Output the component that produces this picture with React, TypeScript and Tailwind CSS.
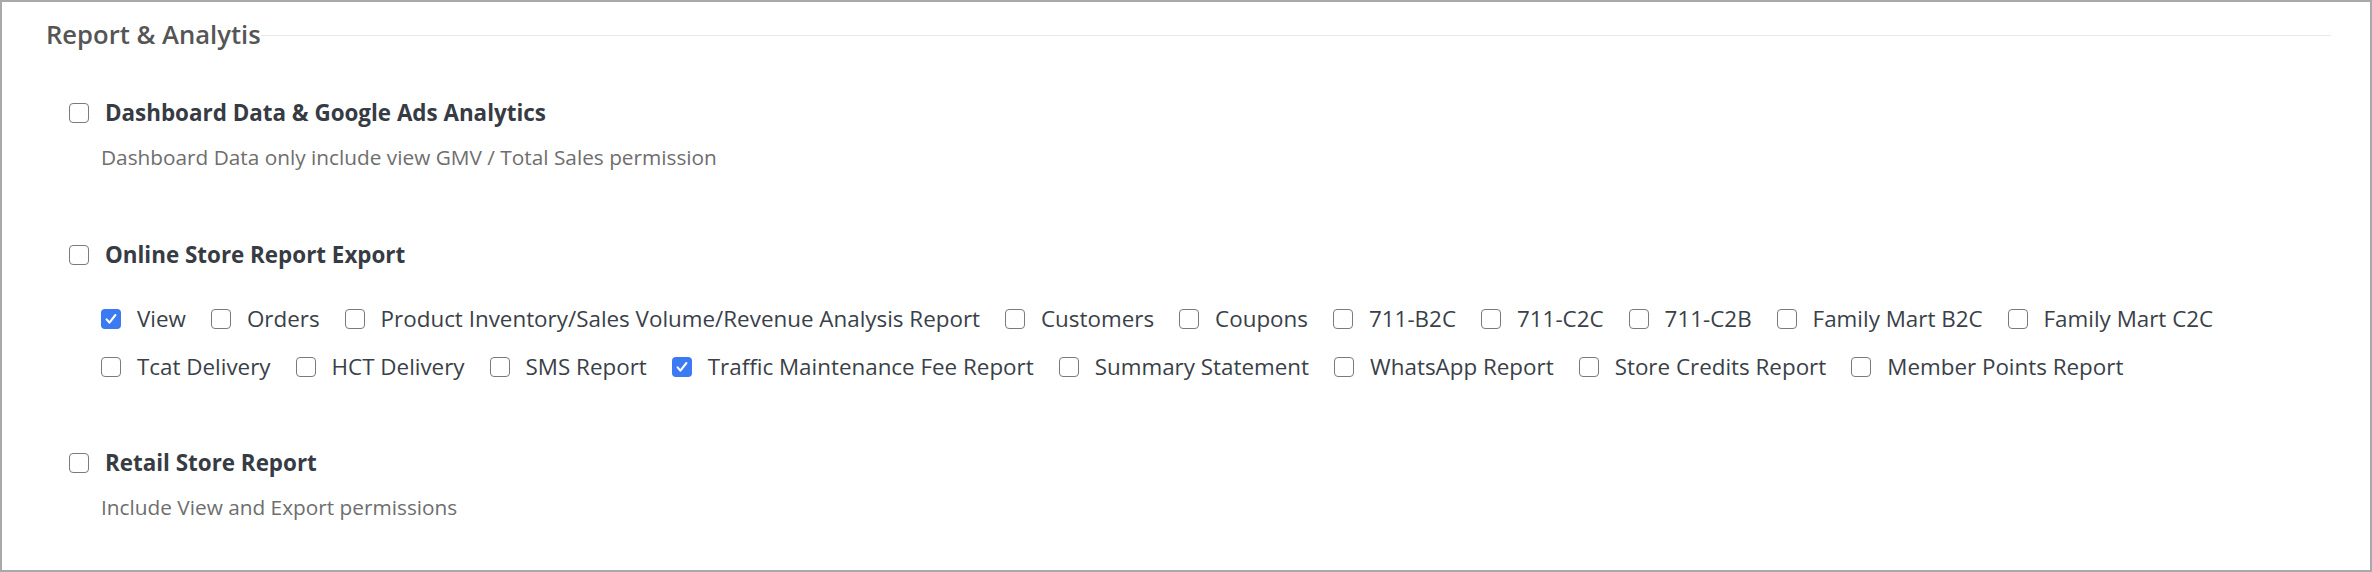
import React from 'react';

type Item = { label: string; checked?: boolean };

const onlineStoreItems: Item[] = [
    { label: 'View', checked: true },
    { label: 'Orders' },
    { label: 'Product Inventory/Sales Volume/Revenue Analysis Report' },
    { label: 'Customers' },
    { label: 'Coupons' },
    { label: '711-B2C' },
    { label: '711-C2C' },
    { label: '711-C2B' },
    { label: 'Family Mart B2C' },
    { label: 'Family Mart C2C' },
    { label: 'Tcat Delivery' },
    { label: 'HCT Delivery' },
    { label: 'SMS Report' },
    { label: 'Traffic Maintenance Fee Report', checked: true },
    { label: 'Summary Statement' },
    { label: 'WhatsApp Report' },
    { label: 'Store Credits Report' },
    { label: 'Member Points Report' },
];

const Checkbox: React.FC<{ checked?: boolean }> = ({ checked }) => (
    <span
        className={`flex h-[20px] w-[20px] shrink-0 items-center justify-center rounded-[4px] ${checked ? 'bg-[#3b7af3]' : 'border-[1.5px] border-[#7a7a7a] bg-white'}`}
    >
        {checked && (
            <svg viewBox="0 0 20 20" className="h-[16px] w-[16px]" fill="none">
                <path d="M4.5 10.5l3.5 4 7.5-9.5" stroke="white" strokeWidth="2.6" strokeLinecap="round" strokeLinejoin="round" />
            </svg>
        )}
    </span>
);

const SectionHeading: React.FC<{ title: string }> = ({ title }) => (
    <div className="flex h-[30px] items-center gap-[16px]">
        <Checkbox />
        <span className="text-[22.4px] font-bold text-[#363b44]">{title}</span>
    </div>
);

const Description: React.FC<{ text: string }> = ({ text }) => (
    <p className="mt-[15px] flex h-[30px] items-center pl-[32px] text-[20.8px] text-[#6e6e6e]">{text}</p>
);

export default function App() {
    return (
        <div className="h-[572px] w-full border-2 border-[#a9a9a9] bg-white pl-[44px] pr-[39px] pt-[17px] font-['Open_Sans',sans-serif] tabular-nums">
            {/* Title with rule */}
            <div className="flex h-[32px] items-center">
                <h2 className="text-[25.6px] font-semibold text-[#555555]">Report &amp; Analytis</h2>
                <div className="h-px flex-1 bg-[#e8e8e8]"></div>
            </div>

            <div className="pl-[23px]">
                {/* Dashboard */}
                <div className="mt-[47px]">
                    <SectionHeading title="Dashboard Data & Google Ads Analytics" />
                    <Description text="Dashboard Data only include view GMV / Total Sales permission" />
                </div>

                {/* Online Store */}
                <div className="mt-[67px]">
                    <SectionHeading title="Online Store Report Export" />
                    <div className="mt-[34px] flex flex-wrap gap-x-[25px] gap-y-[18px] pl-[32px]">
                        {onlineStoreItems.map(item => (
                            <label key={item.label} className="flex h-[30px] items-center gap-[16px]">
                                <Checkbox checked={item.checked} />
                                <span className="text-[22.4px] text-[#3a3f48]">{item.label}</span>
                            </label>
                        ))}
                    </div>
                </div>

                {/* Retail Store */}
                <div className="mt-[66px]">
                    <SectionHeading title="Retail Store Report" />
                    <Description text="Include View and Export permissions" />
                </div>
            </div>
        </div>
    );
}
